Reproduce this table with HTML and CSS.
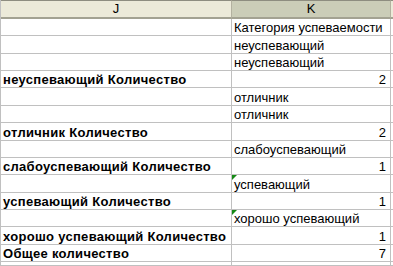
FILE: index.html
```html
<!DOCTYPE html>
<html lang="ru">
<head>
<meta charset="utf-8">
<title>Сводка по категориям</title>
<link rel="stylesheet" href="styles.css">
</head>
<body>
<div class="sheet">
  <div class="hd">J</div><div class="hd hd-sel">K</div><div class="hd hd-end"></div>

  <div class="c"></div><div class="c">Категория успеваемости</div><div class="c end"></div>
  <div class="c"></div><div class="c">неуспевающий</div><div class="c end"></div>
  <div class="c"></div><div class="c">неуспевающий</div><div class="c end"></div>
  <div class="c b">неуспевающий Количество</div><div class="c num">2</div><div class="c end"></div>
  <div class="c"></div><div class="c">отличник</div><div class="c end"></div>
  <div class="c"></div><div class="c">отличник</div><div class="c end"></div>
  <div class="c b">отличник Количество</div><div class="c num">2</div><div class="c end"></div>
  <div class="c"></div><div class="c">слабоуспевающий</div><div class="c end"></div>
  <div class="c b">слабоуспевающий Количество</div><div class="c num">1</div><div class="c end"></div>
  <div class="c"></div><div class="c flag">успевающий</div><div class="c end"></div>
  <div class="c b">успевающий Количество</div><div class="c num">1</div><div class="c end"></div>
  <div class="c"></div><div class="c flag">хорошо успевающий</div><div class="c end"></div>
  <div class="c b">хорошо успевающий Количество</div><div class="c num">1</div><div class="c end"></div>
  <div class="c b">Общее количество</div><div class="c num">7</div><div class="c end"></div>
  <div class="c"></div><div class="c"></div><div class="c end"></div>
</div>
</body>
</html>
```
FILE: styles.css
```css
html, body {
  margin: 0;
  padding: 0;
  background: #ffffff;
}

.sheet {
  width: 393px;
  height: 266px;
  overflow: hidden;
  display: grid;
  grid-template-columns: 231px 159px 1fr;
  grid-template-rows: 19px repeat(14, 17.36px) 1fr;
  border-left: 1px solid #c0c0c0;
  box-sizing: border-box;
  font-family: "Liberation Sans", Arial, sans-serif;
  font-size: 13px;
  color: #000000;
}

.hd {
  background: #ecead9;
  border-top: 1px solid #8e8d80;
  border-bottom: 2px solid #a3a292;
  border-right: 1px solid #b3b1a0;
  display: flex;
  align-items: center;
  justify-content: center;
  line-height: 16px;
  white-space: nowrap;
}

.hd-sel {
  background: #cbcdb8;
}

.hd-end {
  border-right: none;
}

.c {
  border-right: 1px solid #c0c0c0;
  border-bottom: 1px solid #c0c0c0;
  padding: 0 3px 0 2px;
  line-height: 14px;
  white-space: nowrap;
  overflow: visible;
  position: relative;
  display: flex;
  align-items: flex-end;
  min-width: 0;
}

.end {
  border-right: none;
}

.b {
  font-weight: bold;
  letter-spacing: 0.3px;
}

.num {
  justify-content: flex-end;
  padding-right: 4px;
}

.flag::before {
  content: "";
  position: absolute;
  left: 0;
  top: 0;
  width: 0;
  height: 0;
  border-top: 5px solid #168a16;
  border-right: 5px solid transparent;
}
```
